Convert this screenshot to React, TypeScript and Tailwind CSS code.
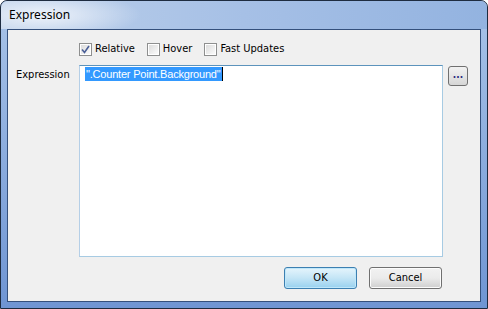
const Check = ({ checked, label }: { checked?: boolean; label: string }) => (
  <div className="flex items-center gap-[3px]">
    <div className="w-[13px] h-[13px] border border-[#8e8f8f] bg-white p-[1px]">
      <div className="w-full h-full bg-gradient-to-br from-[#dcdcdc] to-[#fbfbfb] flex items-center justify-center">
        {checked && (
          <svg width="9" height="9" viewBox="0 0 9 9">
            <path d="M1 4.5 L3.5 7.5 L8 1" fill="none" stroke="#4a5f97" strokeWidth="1.6" />
          </svg>
        )}
      </div>
    </div>
    <span>{label}</span>
  </div>
);

const Btn = ({ label, primary }: { label: string; primary?: boolean }) => (
  <div
    className={
      "w-[73px] h-[22px] rounded-[3px] border flex items-center justify-center " +
      (primary
        ? "border-[#3c7fb1] bg-gradient-to-b from-[#e5f4fc] via-[#c4e5f6] to-[#98d1ef] shadow-[inset_0_0_0_1px_#bfe7fa]"
        : "border-[#707070] bg-gradient-to-b from-[#f2f2f2] via-[#ebebeb] to-[#cfcfcf] shadow-[inset_0_0_0_1px_#fcfcfc]")
    }
  >
    {label}
  </div>
);

export default function App() {
  return (
    <div
      className="w-[488px] h-[309px] flex flex-col rounded-t-[7px] border border-[#1e2c40] bg-gradient-to-b from-[#a9c4e8] to-[#6f95d3] px-[6px] pb-[6px] text-[11px] text-black"
      style={{ fontFamily: "Tahoma, 'DejaVu Sans Condensed', 'Liberation Sans', sans-serif" }}
    >
      <div className="h-[28px] -mx-[6px] px-[8px] flex items-center rounded-t-[7px] bg-[radial-gradient(ellipse_100px_24px_at_40px_14px,#eef3fa,transparent),linear-gradient(to_right,#bcd0ea,#a6c0e6_50%,#93b3e0)]">
        <span className="text-[12px] text-black" style={{ fontFamily: "'Noto Sans', 'Liberation Sans', sans-serif" }}>
          Expression
        </span>
      </div>
      <div className="flex-1 border border-[#34507c] bg-[#f0f0f0] flex flex-col">
        <div className="flex gap-[12px] pl-[71px] pt-[9px] h-[30px] items-center">
          <Check checked label="Relative" />
          <Check label="Hover" />
          <Check label="Fast Updates" />
        </div>
        <div className="flex pt-[5px]">
          <div className="w-[71px] pl-[8px] pt-[2px]">Expression</div>
          <div className="w-[364px] h-[192px] border border-[#abadb3] border-t-[#5c93bc] border-r-[#a7cbe3] border-b-[#a7cbe3] border-l-[#b5cfe7] bg-white p-[1px] pl-[5px]">
            <span
              className="bg-[#3399ff] text-white px-[1px] leading-[14px] inline-block tracking-[-0.2px]"
              style={{ fontFamily: "'Liberation Sans', sans-serif" }}
            >
              ".Counter Point.Background"
            </span>
            <span className="inline-block w-[1px] h-[14px] bg-black align-top" />
          </div>
          <div className="ml-[5px] mt-[1px] w-[20px] h-[20px] rounded-[3px] border border-[#707070] bg-gradient-to-b from-[#f2f2f2] to-[#d6d6d6] flex items-end justify-center pb-[5px] text-[#2b2b80] text-[10px] leading-none font-bold">
            ...
          </div>
        </div>
        <div className="flex justify-end gap-[12px] pr-[38px] pt-[10px]">
          <Btn label="OK" primary />
          <Btn label="Cancel" />
        </div>
      </div>
    </div>
  );
}
